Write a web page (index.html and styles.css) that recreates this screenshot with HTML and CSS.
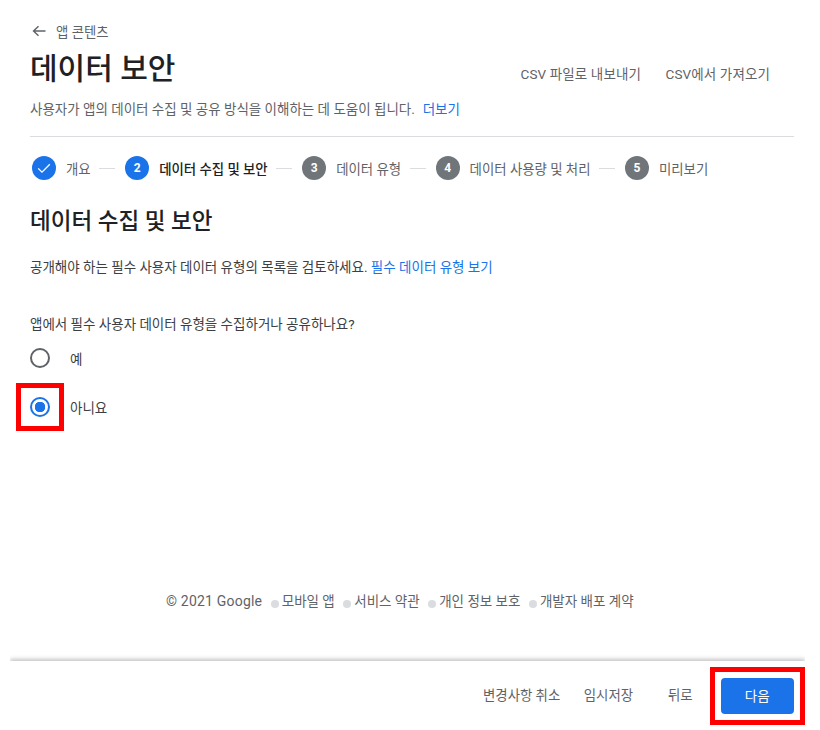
FILE: index.html
```html
<!DOCTYPE html>
<html lang="ko">
<head>
<meta charset="utf-8">
<title>데이터 보안</title>
<link rel="stylesheet" href="styles.css">
</head>
<body>
<div class="page">
  <header class="head">
    <a class="back">
      <svg class="back-icon" width="16" height="16" viewBox="0 0 16 16"><path d="M14.5 8H2.5M7.5 3.2 2.5 8l5 4.8" fill="none" stroke="#5f6368" stroke-width="1.4"/></svg>
      <span>앱 콘텐츠</span>
    </a>
    <div class="title-row">
      <h1>데이터 보안</h1>
      <div class="actions"><span>CSV 파일로 내보내기</span><span>CSV에서 가져오기</span></div>
    </div>
    <p class="sub">사용자가 앱의 데이터 수집 및 공유 방식을 이해하는 데 도움이 됩니다. <a class="link more">더보기</a></p>
  </header>
  <nav class="steps">
    <div class="step"><span class="dot blue"><svg width="16" height="16" viewBox="0 0 16 16"><path d="M2.2 8.4 6 12.1l7.8-7.9" fill="none" stroke="#fff" stroke-width="1.3"/></svg></span><span class="lbl">개요</span></div>
    <i class="sep"></i>
    <div class="step"><span class="dot blue">2</span><span class="lbl cur">데이터 수집 및 보안</span></div>
    <i class="sep"></i>
    <div class="step"><span class="dot">3</span><span class="lbl">데이터 유형</span></div>
    <i class="sep"></i>
    <div class="step"><span class="dot">4</span><span class="lbl">데이터 사용량 및 처리</span></div>
    <i class="sep"></i>
    <div class="step"><span class="dot">5</span><span class="lbl">미리보기</span></div>
  </nav>
  <main>
    <h2>데이터 수집 및 보안</h2>
    <p class="intro">공개해야 하는 필수 사용자 데이터 유형의 목록을 검토하세요. <a class="link">필수 데이터 유형 보기</a></p>
    <p class="q">앱에서 필수 사용자 데이터 유형을 수집하거나 공유하나요?</p>
    <div class="opt opt-yes"><span class="radio"></span><span>예</span></div>
    <div class="opt opt-no"><span class="radio on"></span><span>아니요</span><b class="mark mark-radio"></b></div>
  </main>
  <footer class="foot">
    <span class="copy">© 2021 Google</span><span class="fl"><i></i>모바일 앱</span><span class="fl"><i></i>서비스 약관</span><span class="fl"><i></i>개인 정보 보호</span><span class="fl"><i></i>개발자 배포 계약</span>
  </footer>
  <div class="bar">
    <span class="b b1">변경사항 취소</span>
    <span class="b b2">임시저장</span>
    <span class="b b3">뒤로</span>
    <span class="next">다음<b class="mark mark-next"></b></span>
  </div>
</div>
</body>
</html>
```
FILE: styles.css
```css
* { box-sizing: border-box; }
html, body { margin: 0; height: 100%; background: #fff; }
body {
  font-family: Roboto, "Noto Sans CJK KR", sans-serif;
  color: #3c4043;
  font-size: 13.5px;
  overflow: hidden;
}
.page { width: 820px; height: 730px; padding: 21px 26px 0 30px; position: relative; }
p, h1, h2 { margin: 0; font-weight: 400; }
.link { color: #1a73e8; }
.back { display: flex; align-items: center; gap: 9px; color: #5f6368; font-size: 13.4px; height: 20px; padding-left: 1px; }
.title-row { display: flex; justify-content: space-between; margin-top: 6px; height: 44px; }
h1 { font-size: 30px; line-height: 44px; font-weight: 500; color: #202124; }
.actions { display: flex; gap: 24.5px; padding: 17px 24px 0 0; line-height: 20px; color: #5f6368; font-size: 13.5px; letter-spacing: .12px; }
.sub { margin-top: 8px; line-height: 20px; color: #5f6368; }
.more { margin-left: 4.5px; }
.steps { margin-top: 17px; border-top: 1px solid #dadce0; padding: 7px 0 0 2px; display: flex; align-items: center; height: 56px; }
.step { display: flex; align-items: center; gap: 10px; }
.dot { width: 24px; height: 24px; border-radius: 50%; background: #70757a; color: #fff; font-size: 12px; font-weight: 700; display: flex; align-items: center; justify-content: center; }
.dot.blue { background: #1a73e8; }
.lbl { color: #5f6368; font-size: 13.4px; }
.lbl.cur { color: #202124; font-weight: 500; }
.sep { width: 16px; height: 1px; background: #dadce0; margin: 0 10px 0 8.5px; }
h2 { margin-top: 14px; font-size: 22.5px; line-height: 30px; font-weight: 500; color: #202124; }
.intro { margin-top: 21px; line-height: 20px; }
.q { margin-top: 37px; line-height: 20px; }
.opt { display: flex; align-items: center; gap: 20px; height: 24px; position: relative; }
.opt-yes { margin-top: 12px; }
.opt-no { margin-top: 25px; }
.radio { width: 20px; height: 20px; border-radius: 50%; border: 2px solid #5f6368; background: #fff; flex: none; }
.radio.on { border-color: #1a73e8; background: radial-gradient(circle, #1a73e8 0 5px, #fff 5.5px); }
.mark { position: absolute; border: 5px solid #f00; }
.mark-radio { left: -14px; top: -12px; width: 48px; height: 48px; }
.foot { position: absolute; left: 166px; right: 0; top: 591px; display: flex; gap: 8.5px; line-height: 20px; color: #5f6368; }
.copy { font-size: 14px; letter-spacing: .2px; }
.fl { display: flex; align-items: center; }
.fl i { width: 8px; height: 8px; border-radius: 50%; background: #dadce0; margin: 5px 3px 0 0; }
.bar { position: absolute; left: 10px; top: 661px; width: 795px; height: 69px; background: #fff; display: flex; align-items: flex-start; box-shadow: 0 -2px 4px rgba(60,64,67,.3); clip-path: inset(-8px 0 0 0); padding-top: 17px; }
.b { line-height: 36px; color: #5f6368; font-size: 13.4px; }
.b1 { margin-left: 473px; }
.b2 { margin-left: 23.5px; }
.b3 { margin-left: 35px; }
.next { position: relative; margin-left: 28px; width: 73px; height: 36px; background: #1a73e8; color: #fff; border-radius: 4px; text-align: center; line-height: 36px; }
.mark-next { left: -11px; top: -11px; width: 95px; height: 58px; }
```
